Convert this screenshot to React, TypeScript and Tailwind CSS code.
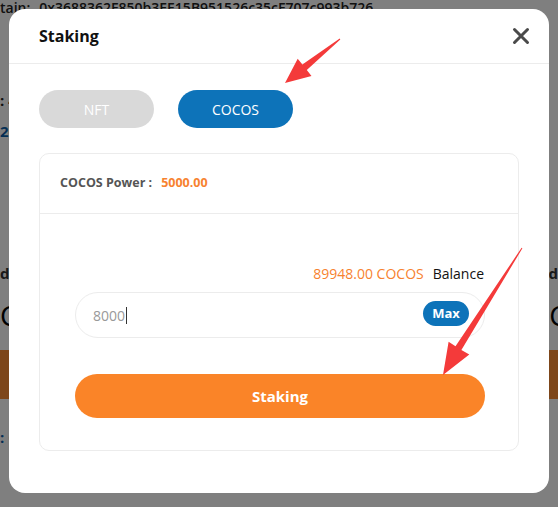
import { useState } from "react";

const sans = "font-['Open_Sans','Noto_Sans',sans-serif]";

const Arrows = () => (
  <svg
    className="pointer-events-none absolute inset-0"
    width="558"
    height="507"
    viewBox="0 0 558 507"
  >
    <polygon
      points="339.7,38.6 302.4,64.5 297.7,58.7 285,83 311.5,75.9 306.8,70 340.3,39.4"
      fill="#f43a3a"
    />
    <polygon
      points="521.6,247.7 455.5,346.2 448.6,341.7 443,375 469.3,354.4 461.4,349.9 522.4,248.3"
      fill="#f43a3a"
    />
  </svg>
);

export default function App() {
  const [tab, setTab] = useState<"nft" | "cocos">("cocos");

  return (
    <div className={`relative h-[507px] w-[558px] overflow-hidden bg-white ${sans}`}>
      {/* page behind the dialog */}
      <div className="flex flex-col text-[#222]">
        <div className="flex h-[16px] gap-[9px] text-[14px] font-semibold leading-[16px] whitespace-nowrap">
          <span>tain:</span>
          <span>0x3688362F850b3EE15B951526c35cF707c993b726</span>
        </div>
        <div className="mt-[74px] text-[15px] font-bold leading-[20px]">: 4</div>
        <div className="mt-[11px] text-[15px] font-bold leading-[20px] text-[#0b5ea8]">26</div>
        <div className="mt-[122px] flex justify-between text-[15px] font-bold leading-[20px] text-[#333]">
          <span>de</span>
          <span>d</span>
        </div>
        <div className="mt-[12px] flex justify-between text-[28px] leading-[40px] text-black">
          <span>C</span>
          <span className="mr-[-9px]">.C</span>
        </div>
        <div className="mt-[15px] h-[49px] bg-[#fa8c34]" />
        <div className="mt-[28px] text-[15px] font-bold leading-[20px] text-[#0b5ea8]">: C</div>
      </div>

      {/* overlay */}
      <div className="absolute inset-0 bg-black/50" />

      {/* dialog */}
      <div className="absolute left-[9px] top-[9px] flex h-[484px] w-[540px] flex-col rounded-[16px] bg-white">
        <div className="flex h-[55px] items-center justify-between border-b border-[#ececec] pl-[30px] pr-[19px]">
          <span className="text-[16px] font-bold text-[#111]">Staking</span>
          <svg width="18" height="18" viewBox="0 0 18 18">
            <path
              d="M2.5 2.5 L15.5 15.5 M15.5 2.5 L2.5 15.5"
              stroke="#4a4a4a"
              strokeWidth="3"
              strokeLinecap="round"
            />
          </svg>
        </div>

        <div className="flex gap-[24px] px-[30px] pt-[26px]">
          <button
            onClick={() => setTab("nft")}
            className={`h-[38px] w-[115px] rounded-full text-[14px] text-white ${
              tab === "nft" ? "bg-[#0d73b9]" : "bg-[#d9d9d9]"
            }`}
          >
            NFT
          </button>
          <button
            onClick={() => setTab("cocos")}
            className={`h-[38px] w-[115px] rounded-full text-[14px] text-white ${
              tab === "cocos" ? "bg-[#0d73b9]" : "bg-[#d9d9d9]"
            }`}
          >
            COCOS
          </button>
        </div>

        <div className="mx-[30px] mt-[25px] flex h-[298px] flex-col rounded-[10px] border border-[#ececec]">
          <div className="flex h-[60px] items-center gap-[9px] border-b border-[#ececec] pl-[20px] text-[12.5px] font-bold">
            <span className="text-[#555]">COCOS Power :</span>
            <span className="text-[#f7822f]">5000.00</span>
          </div>

          <div className="flex flex-col pl-[35px] pr-[33px] pt-[49px]">
            <div className="flex h-[20px] items-center justify-end gap-[9px] pr-[1px] text-[14px]">
              <span className="text-[#f7822f]">89948.00 COCOS</span>
              <span className="text-[#111]">Balance</span>
            </div>

            <div className="mt-[9px] flex h-[46px] items-center justify-between rounded-full border border-[#ececec] pl-[17px] pr-[15px]">
              <div className="flex items-center text-[14px] text-[#999]">
                8000
                <span className="ml-[1px] h-[17px] w-px bg-[#333]" />
              </div>
              <button className="-mt-[3px] h-[25px] w-[46px] rounded-full bg-[#0d73b9] text-[13px] font-bold text-white">
                Max
              </button>
            </div>

            <button className="mt-[36px] h-[44px] w-full rounded-full bg-[#fa8428] text-[15px] font-bold text-white">
              Staking
            </button>
          </div>
        </div>
      </div>

      <Arrows />
    </div>
  );
}
